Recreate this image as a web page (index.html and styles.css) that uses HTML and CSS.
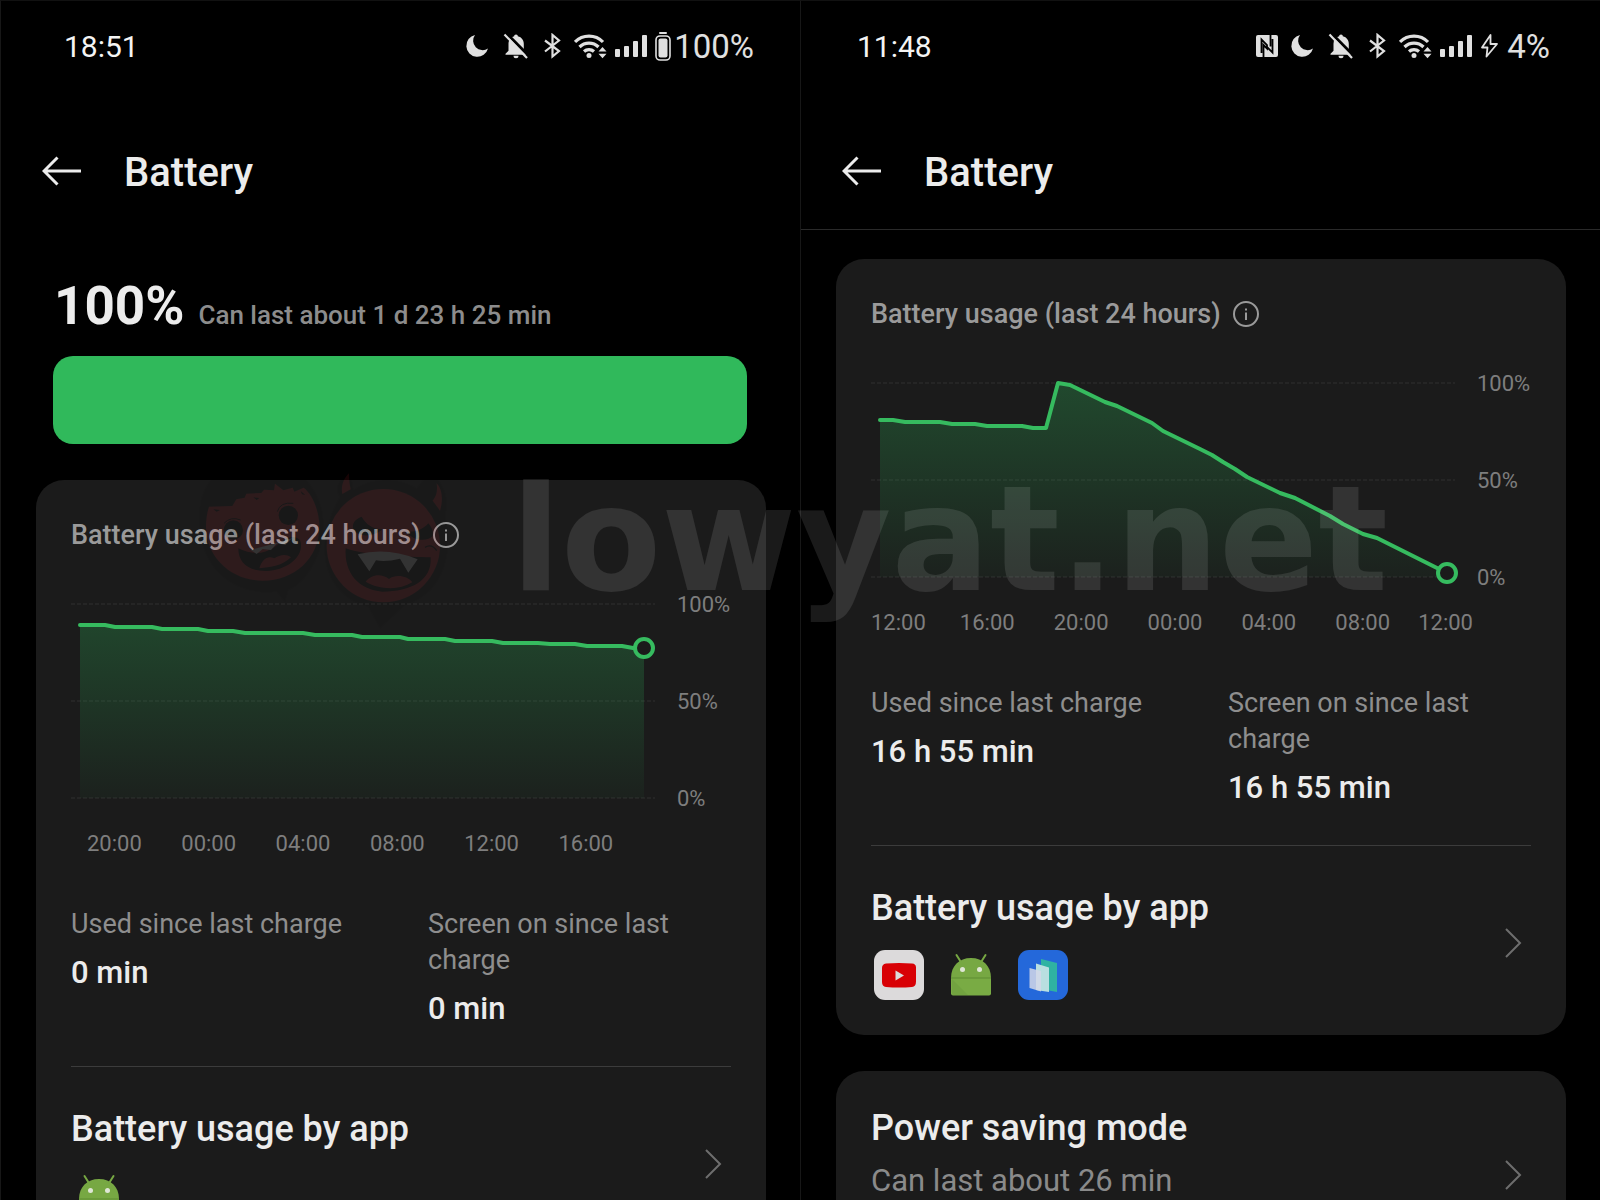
FILE: index.html
```html
<!DOCTYPE html>
<html lang="en">
<head>
    <meta charset="UTF-8">
    <meta name="viewport" content="width=device-width, initial-scale=1.0">
    <title>Battery</title>
    <link rel="stylesheet" href="styles.css">
</head>
<body>
    <!-- Shared icons -->
    <svg class="sprite" aria-hidden="true">
        <symbol id="moon" viewBox="0 0 30 24">
            <path d="M13 1A11 11 0 1 0 26 14.500A9.500 9.500 0 0 1 13 1z" fill="currentColor"/>
        </symbol>
        <symbol id="bell-off" viewBox="0 0 32 26">
            <path d="M16 1.500c1.200 0 1.800.8 1.800 1.800 4 1 6 4 6 8v6.500l3 3v1H5.500v-1l3-3v-7c0-4 2-6.500 5.700-7.500 0-1 .6-1.800 1.800-1.800z" fill="currentColor"/>
            <path d="M13.500 22.800h5a2.500 2.500 0 0 1-5 0z" fill="currentColor"/>
            <path d="M6 0L29 23" stroke="#000" stroke-width="3"/>
            <path d="M4.500 1.500L27 25" stroke="currentColor" stroke-width="2.200"/>
        </symbol>
        <symbol id="bluetooth" viewBox="0 0 26 26">
            <path d="M5 7.500L19 18 12.500 23.500V2L19 7.500 5 18.500" fill="none" stroke="currentColor" stroke-width="2.200"/>
        </symbol>
        <symbol id="wifi" viewBox="0 0 33 26">
            <g fill="none" stroke="currentColor" stroke-width="3.200">
                <path d="M1 9A19.500 19.500 0 0 1 29 9"/>
                <path d="M5.500 14A13.500 13.500 0 0 1 24.500 14"/>
                <path d="M10 18.500A7.500 7.500 0 0 1 20 18.500"/>
            </g>
            <circle cx="15" cy="22.500" r="2.500" fill="currentColor"/>
            <path d="M24.500 18.500l4-4.500 4 4.500zM24.500 20.800l4 4.500 4-4.500z" fill="currentColor"/>
        </symbol>
        <symbol id="signal" viewBox="0 0 32 24">
            <g fill="currentColor">
                <rect x="0" y="15" width="5" height="8" rx="1"/>
                <rect x="9" y="12" width="5" height="11" rx="1"/>
                <rect x="18" y="7" width="5" height="16" rx="1"/>
                <rect x="27" y="1" width="5" height="22" rx="1"/>
            </g>
        </symbol>
        <symbol id="battery-full" viewBox="0 0 16 30">
            <rect x="4" y="1" width="8" height="2" rx="1" fill="currentColor"/>
            <rect x="1" y="5" width="14" height="24" rx="4" fill="none" stroke="currentColor" stroke-width="1.600"/>
            <rect x="3.500" y="7.500" width="9" height="19" rx="2" fill="currentColor"/>
        </symbol>
        <symbol id="nfc" viewBox="0 0 24 24">
            <rect x="1" y="1" width="22" height="22" rx="2" fill="currentColor"/>
            <path d="M6.500 19V5.500L12 11v3.500L8.500 11v12M17.500 5v13.500L12 13M15.500 1v11.500" fill="none" stroke="#000" stroke-width="1.800"/>
        </symbol>
        <symbol id="bolt" viewBox="0 0 24 26">
            <path d="M10.500 2L2 14.500h5.500L6.500 23.500l10.500-12.500h-6.500z" fill="none" stroke="currentColor" stroke-width="1.800" stroke-linejoin="round"/>
        </symbol>
        <symbol id="arrow-left" viewBox="0 0 40 30">
            <path d="M39 15H2M15.500 1.500L2 15l13.500 13.500" fill="none" stroke="currentColor" stroke-width="3"/>
        </symbol>
        <symbol id="info" viewBox="0 0 26 26">
            <circle cx="13" cy="13" r="12" fill="none" stroke="currentColor" stroke-width="2"/>
            <path d="M13 11.500V19M13 7.500v2" stroke="currentColor" stroke-width="2"/>
        </symbol>
        <symbol id="chevron" viewBox="0 0 18 32">
            <path d="M2 2l14 14L2 30" fill="none" stroke="currentColor" stroke-width="2"/>
        </symbol>
        <symbol id="app-youtube" viewBox="0 0 50 50">
            <rect width="50" height="50" rx="11" fill="#dcdadb"/>
            <path d="M12 13.500q13-1 26 0 4 .3 4 4v14q0 5-4 5.500-13 1-26 0-4-.5-4-5v-14q0-4 4-4.500z" fill="#d80005"/>
            <path d="M21.500 20.500l8.500 5-8.500 5z" fill="#dcdadb"/>
        </symbol>
        <symbol id="app-android" viewBox="0 0 50 50">
            <path d="M10.500 5l5 8M39.500 5l-5 8" stroke="#77a843" stroke-width="2" stroke-linecap="round"/>
            <path d="M5 28C5 16 13 8 25 8s20 8 20 20z" fill="#77a843"/>
            <path d="M5 28h40v15.500a2 2 0 0 1-2 2H7a2 2 0 0 1-2-2z" fill="#79ab44"/>
            <path d="M5 28h40" stroke="#5f8c33" stroke-width="1"/>
            <path d="M6 29l16 16H7l-1-2z" fill="#72a340"/>
            <circle cx="16.500" cy="19.500" r="2.500" fill="#dfe6d6"/>
            <circle cx="33.500" cy="19.500" r="2.500" fill="#dfe6d6"/>
        </symbol>
        <symbol id="app-cards" viewBox="0 0 50 50">
            <rect width="50" height="50" rx="11" fill="#2468da"/>
            <path d="M23 9l16 4v29l-16-3z" fill="#2fb3a2"/>
            <path d="M18 13.500l13 4v24.500l-13-2z" fill="#b9dfe0"/>
            <path d="M11.500 18l11.500 3v20.500L11.500 38z" fill="#d3d8e8" fill-opacity=".85"/>
        </symbol>
        <linearGradient id="areaFill" x1="0" y1="12" x2="0" y2="206" gradientUnits="userSpaceOnUse">
            <stop offset="0" stop-color="#2fba5c" stop-opacity=".29"/>
            <stop offset="1" stop-color="#2fba5c" stop-opacity=".04"/>
        </linearGradient>
    </svg>

    <main class="screens">
        <!-- Before -->
        <section class="screen">
            <div class="status-bar">
                <time>18:51</time>
                <div class="status-right">
                    <div class="status-icons">
                        <svg width="30" height="24"><use href="#moon"/></svg>
                        <svg width="32" height="26"><use href="#bell-off"/></svg>
                        <svg width="26" height="26"><use href="#bluetooth"/></svg>
                        <svg width="33" height="26"><use href="#wifi"/></svg>
                        <svg width="32" height="24"><use href="#signal"/></svg>
                        <svg width="16" height="30"><use href="#battery-full"/></svg>
                    </div>
                    <span>100%</span>
                </div>
            </div>
            <header class="app-bar">
                <button class="back-btn" aria-label="Back"><svg width="40" height="30"><use href="#arrow-left"/></svg></button>
                <h1>Battery</h1>
            </header>

            <div class="level">
                <p class="level-text"><strong>100%</strong> <span>Can last about 1 d 23 h 25 min</span></p>
                <div class="level-bar"></div>
            </div>

            <article class="card">
                <div class="card-title">
                    <h2>Battery usage (last 24 hours)</h2>
                    <button class="info-btn" aria-label="Info"><svg width="26" height="26"><use href="#info"/></svg></button>
                </div>
                <div class="chart">
                    <svg class="plot" viewBox="0 0 584 218" role="img" aria-label="Battery level">
                        <path class="grid-line" d="M0 12H584M0 109H584M0 206H584"/>
                        <path class="area" d="M9 33H34L44 35H81L91 37H127L137 39H162L174 41H232L244 43H281L291 45H329L337 47H374L384 49H421L432 51H467L479 52H504L516 54H551L562 56H573V206H9z"/>
                        <path class="line" d="M9 33H34L44 35H81L91 37H127L137 39H162L174 41H232L244 43H281L291 45H329L337 47H374L384 49H421L432 51H467L479 52H504L516 54H551L562 56H573"/>
                        <circle class="dot" cx="573" cy="56" r="9"/>
                    </svg>
                    <div class="y-axis"><span>100%</span><span>50%</span><span>0%</span></div>
                </div>
                <div class="x-axis x-axis-evening">
                    <span>20:00</span><span>00:00</span><span>04:00</span><span>08:00</span><span>12:00</span><span>16:00</span>
                </div>
                <dl class="stats">
                    <div><dt>Used since last charge</dt><dd>0 min</dd></div>
                    <div><dt>Screen on since last charge</dt><dd>0 min</dd></div>
                </dl>
                <a class="row row-apps" href="#">
                    <div>
                        <h3>Battery usage by app</h3>
                        <div class="apps">
                            <svg width="50" height="50"><use href="#app-android"/></svg>
                        </div>
                    </div>
                    <svg class="chevron" width="18" height="32"><use href="#chevron"/></svg>
                </a>
            </article>
        </section>

        <!-- After -->
        <section class="screen">
            <div class="status-bar status-bar-after">
                <time>11:48</time>
                <div class="status-right">
                    <div class="status-icons">
                        <svg width="24" height="24"><use href="#nfc"/></svg>
                        <svg width="30" height="24"><use href="#moon"/></svg>
                        <svg width="32" height="26"><use href="#bell-off"/></svg>
                        <svg width="26" height="26"><use href="#bluetooth"/></svg>
                        <svg width="33" height="26"><use href="#wifi"/></svg>
                        <svg width="32" height="24"><use href="#signal"/></svg>
                        <svg width="24" height="26"><use href="#bolt"/></svg>
                    </div>
                    <span>4%</span>
                </div>
            </div>
            <header class="app-bar scrolled">
                <button class="back-btn" aria-label="Back"><svg width="40" height="30"><use href="#arrow-left"/></svg></button>
                <h1>Battery</h1>
            </header>

            <article class="card">
                <div class="card-title">
                    <h2>Battery usage (last 24 hours)</h2>
                    <button class="info-btn" aria-label="Info"><svg width="26" height="26"><use href="#info"/></svg></button>
                </div>
                <div class="chart">
                    <svg class="plot" viewBox="0 0 584 218" role="img" aria-label="Battery level">
                        <path class="grid-line" d="M0 12H584M0 109H584M0 206H584"/>
                        <path class="area" d="M9 49H22L34 51H69L81 53H104L116 55H151L162 57H175L187 12 199 14 234 31 246 35 281 52 292 60 329 78 341 84 352 91 364 98 376 106 409 122 424 127 459 145 472 153 492 163 506 167 566 197 576 202V206H9z"/>
                        <path class="line" d="M9 49H22L34 51H69L81 53H104L116 55H151L162 57H175L187 12 199 14 234 31 246 35 281 52 292 60 329 78 341 84 352 91 364 98 376 106 409 122 424 127 459 145 472 153 492 163 506 167 566 197 576 202"/>
                        <circle class="dot" cx="576" cy="202" r="9"/>
                    </svg>
                    <div class="y-axis"><span>100%</span><span>50%</span><span>0%</span></div>
                </div>
                <div class="x-axis x-axis-noon">
                    <span>12:00</span><span>16:00</span><span>20:00</span><span>00:00</span><span>04:00</span><span>08:00</span><span>12:00</span>
                </div>
                <dl class="stats">
                    <div><dt>Used since last charge</dt><dd>16 h 55 min</dd></div>
                    <div><dt>Screen on since last charge</dt><dd>16 h 55 min</dd></div>
                </dl>
                <a class="row row-apps" href="#">
                    <div>
                        <h3>Battery usage by app</h3>
                        <div class="apps">
                            <svg width="50" height="50"><use href="#app-youtube"/></svg>
                            <svg width="50" height="50"><use href="#app-android"/></svg>
                            <svg width="50" height="50"><use href="#app-cards"/></svg>
                        </div>
                    </div>
                    <svg class="chevron" width="18" height="32"><use href="#chevron"/></svg>
                </a>
            </article>

            <article class="card">
                <a class="row row-mode" href="#">
                    <div>
                        <h3>Power saving mode</h3>
                        <p>Can last about 26 min</p>
                    </div>
                    <svg class="chevron" width="18" height="32"><use href="#chevron"/></svg>
                </a>
            </article>
        </section>
    </main>

    <!-- Watermark -->
    <div class="watermark">
        <svg width="300" height="170" viewBox="0 0 900 510" aria-hidden="true">
            <g fill-opacity=".35">
                <path d="M60 140C70 60 130 5 230 0c110-5 200 80 200 195 0 110-70 185-105 195l-10 35-25-30C150 410 40 310 60 140z"/>
                <path d="M480 110C460 90 480 50 510 30l10 60c60-40 130-40 190-5l40-50c40 30 60 80 45 130 30 140-20 240-120 270l-75 70-35-65C440 410 390 270 480 110z"/>
            </g>
            <path d="M87 140l70-2 12-20 25-5 5-12 45-2 8-10 30 2 3-20 25 20 28-8 5 12 28-12C395 100 418 150 418 200c0 95-75 162-170 162S78 290 78 200c0-20 3-42 9-60z" fill="#d41f2c"/>
            <circle cx="610" cy="257" r="170" fill="#d41f2c"/>
            <path d="M487 102c-5-25 5-48 20-62 0 20 2 35 5 48zM758 122c12-15 15-30 12-52 17 18 20 50 10 82z" fill="#d41f2c"/>
            <!-- left face -->
            <circle cx="325" cy="166" r="29"/>
            <circle cx="160" cy="210" r="29"/>
            <path d="M292 155q8-30 48-25M132 190q20-22 50-10" fill="none" stroke="#000" stroke-width="3"/>
            <path d="M100 148l20 2-10 5zM220 112l18 2-8 6zM362 93l14 12-10-2z"/>
            <path d="M175 265q60 30 110-5c30-25 55-40 75-20 15 40-25 85-90 92-60 5-95-20-95-67z"/>
            <path d="M212 270l18 12 18-15 25 3 18-20 25 5 20-20-60 18z" fill="#fff"/>
            <path d="M238 325c10-30 25-38 45-30 15-10 35-15 50-3-25 25-60 30-95 33z" fill="#d41f2c"/>
            <!-- right face -->
            <path d="M545 170c15 25 30 35 62 38-15 18-70 30-87 0-5-18 5-30 25-38zM745 190c-15 18-40 28-65 25 20 30 65 30 78 12 3-15-5-28-13-37z"/>
            <path d="M497 265c70 25 190 25 255 27 5 70-60 103-145 103-70-5-115-55-110-130z"/>
            <path d="M533 283q90-22 180 15l-28 40-25-42q-40 10-72 5l-20 33z" fill="#fff"/>
            <path d="M557 365c15-20 45-28 70-8 20-15 55-10 70 10-40 25-100 22-140-2z" fill="#d41f2c"/>
            <path d="M735 262q20-12 35 10" fill="none" stroke="#000" stroke-width="4"/>
        </svg>
        <span>lowyat.net</span>
    </div>
</body>
</html>
```
FILE: styles.css
```css
* {
    box-sizing: border-box;
}

body {
    margin: 0;
    background: #000;
    color: #ececec;
    font-family: Roboto, "Liberation Sans", sans-serif;
    position: relative;
}

h1, h2, h3, p, dl, dd {
    margin: 0;
    font-weight: 500;
}

button {
    background: none;
    border: none;
    padding: 0;
    color: inherit;
    cursor: pointer;
}

svg {
    display: block;
    flex: none;
}

.sprite {
    position: absolute;
    width: 0;
    height: 0;
}

/* Two phones side by side */
.screens {
    display: grid;
    grid-template-columns: 1fr 1fr;
    height: 100vh;
    overflow: hidden;
}

.screen {
    border-left: 1px solid #171717;
    border-top: 1px solid #111;
    min-width: 0;
}

/* Status bar */
.status-bar {
    display: flex;
    justify-content: space-between;
    align-items: center;
    height: 90px;
    padding: 0 46px 0 63px;
    font-size: 33px;
    color: #e0e0e0;
}

.status-bar-after {
    padding: 0 50px 0 56px;
}

.status-bar time {
    font-size: 30px;
    color: #f4f4f4;
}

.status-right, .status-icons {
    display: flex;
    align-items: center;
}

.status-right {
    gap: 3px;
}

.status-icons {
    gap: 8px;
}

/* Title bar */
.app-bar {
    display: flex;
    align-items: center;
    gap: 42px;
    height: 139px;
    padding: 22px 41px 0;
    border-bottom: 1px solid transparent;
}

.app-bar.scrolled {
    border-color: #2a2a2a;
    margin-bottom: 29px;
}

.app-bar h1 {
    padding-top: 3px;
    font-size: 40px;
    line-height: 48px;
}

/* Charge level */
.level {
    padding: 42px 53px 36px 52px;
}

.level-text {
    display: flex;
    align-items: baseline;
    gap: 14px;
    margin-bottom: 7px;
    padding-left: 1px;
    font-size: 26px;
    line-height: 68px;
    color: #8c8c8c;
}

.level-text strong {
    font-size: 53px;
    font-weight: 700;
    color: #ececec;
}

.level-bar {
    height: 88px;
    border-radius: 20px;
    background: #30b95b;
}

/* Cards */
.card {
    margin: 0 34px 36px 35px;
    padding: 0 35px;
    border-radius: 28px;
    background: #1b1b1b;
}

.card-title {
    display: flex;
    align-items: center;
    gap: 12px;
    padding: 41px 0 43px;
    color: #9a9a9a;
}

.card-title h2 {
    font-size: 27px;
    line-height: 28px;
}

/* Chart */
.chart {
    display: grid;
    grid-template-columns: 1fr 54px;
    gap: 22px;
}

.plot {
    width: 100%;
    height: auto;
    overflow: visible;
}

.grid-line {
    stroke: #303030;
    stroke-dasharray: 4 2;
}

.area {
    fill: url(#areaFill);
}

.line {
    fill: none;
    stroke: #36bb5f;
    stroke-width: 4;
    stroke-linecap: round;
    stroke-linejoin: round;
}

.dot {
    fill: #1b1b1b;
    stroke: #36bb5f;
    stroke-width: 4;
}

.y-axis {
    display: flex;
    flex-direction: column;
    justify-content: space-between;
    margin: 1px 0 -1px;
}

.y-axis, .x-axis {
    font-size: 22px;
    line-height: 24px;
    color: #7e7e7e;
}

.x-axis {
    display: grid;
    padding-top: 22px;
}

.x-axis-evening {
    grid-template-columns: repeat(6, 94fr) 78fr;
    padding-left: 16px;
}

.x-axis-noon {
    grid-template-columns: 89fr repeat(4, 94fr) 83fr 113fr;
}

/* Numbers under the chart */
.stats {
    display: grid;
    grid-template-columns: 1fr 1fr;
    gap: 54px;
    padding: 50px 0 37px;
    border-bottom: 1px solid #3c3c3c;
}

.stats dt {
    font-size: 27px;
    line-height: 36px;
    font-weight: 400;
    color: #8e8e8e;
}

.stats dd {
    padding-top: 11px;
    font-size: 31px;
    line-height: 40px;
}

/* Link rows */
.row {
    display: flex;
    justify-content: space-between;
    align-items: center;
    color: inherit;
    text-decoration: none;
}

.row-apps {
    padding: 41px 0 35px;
}

.row-mode {
    padding: 36px 0;
}

.row-mode div {
    padding-bottom: 44px;
}

.row h3 {
    font-size: 36px;
    line-height: 42px;
}

.row p {
    padding-top: 12px;
    font-size: 31px;
    line-height: 40px;
    font-weight: 400;
    color: #8a8a8a;
}

.apps {
    display: flex;
    gap: 22px;
    padding: 21px 3px 0;
}

.chevron {
    margin: 0 9px 2px 0;
    color: #6e6e6e;
}

/* Watermark over both screens */
.watermark {
    position: absolute;
    top: 460px;
    left: 180px;
    display: flex;
    gap: 31px;
    opacity: .1;
    pointer-events: none;
}

.watermark span {
    font-family: "DejaVu Sans", sans-serif;
    font-size: 146px;
    font-weight: 700;
    line-height: 158px;
    color: #fff;
}
```
